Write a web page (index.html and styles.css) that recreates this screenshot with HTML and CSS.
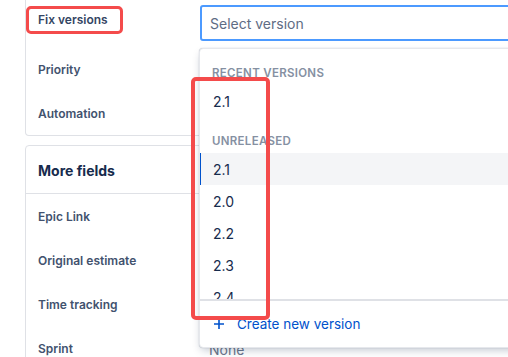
FILE: index.html
```html
<!DOCTYPE html>
<html lang="en">
<head>
  <meta charset="UTF-8" />
  <meta name="viewport" content="width=device-width, initial-scale=1" />
  <title>Fix versions</title>
  <link rel="stylesheet" href="styles.css">
</head>
<body>
  <main class="page">
    <section class="panel panel-top">
      <div class="field-row field-row-first">
        <div class="field-label">Fix versions</div>
        <div class="field-value">
          <div class="select-box">Select version</div>
        </div>
      </div>
      <div class="field-row">
        <div class="field-label">Priority</div>
        <div class="field-value"></div>
      </div>
      <div class="field-row">
        <div class="field-label">Automation</div>
        <div class="field-value"></div>
      </div>
    </section>

    <section class="panel">
      <div class="panel-header">More fields</div>
      <div class="field-row">
        <div class="field-label">Epic Link</div>
        <div class="field-value"></div>
      </div>
      <div class="field-row">
        <div class="field-label">Original estimate</div>
        <div class="field-value"></div>
      </div>
      <div class="field-row">
        <div class="field-label">Time tracking</div>
        <div class="field-value"></div>
      </div>
      <div class="field-row">
        <div class="field-label">Sprint</div>
        <div class="field-value muted">None</div>
      </div>
    </section>

    <!-- version picker menu, open over the fields -->
    <div class="menu">
      <div class="menu-list">
        <div class="menu-group">Recent versions</div>
        <div class="menu-option">2.1</div>
        <div class="menu-group">Unreleased</div>
        <div class="menu-option is-active">2.1</div>
        <div class="menu-option">2.0</div>
        <div class="menu-option">2.2</div>
        <div class="menu-option">2.3</div>
        <div class="menu-option">2.4</div>
      </div>
      <div class="menu-footer">
        <svg class="plus-icon" width="12" height="12" viewBox="0 0 12 12" aria-hidden="true">
          <path d="M6 1v10M1 6h10" stroke="currentColor" stroke-width="1.6" fill="none"/>
        </svg>
        <span>Create new version</span>
      </div>
    </div>

    <!-- annotation marks -->
    <div class="mark mark-label"></div>
    <div class="mark mark-list"></div>
  </main>
</body>
</html>
```

FILE: styles.css
```css
:root {
  --text-color: #172b4d;
  --label-color: #42526e;
  --muted-color: #6b778c;
  --border-color: #dfe1e6;
  --focus-color: #4c9aff;
  --link-color: #0052cc;
  --hover-bg: #f4f5f7;
  --mark-color: #f44b4b;
}

html,
body {
  margin: 0;
  padding: 0;
  overflow: hidden;
  background: #fff;
}

body {
  font-family: 'Inter', 'Liberation Sans', sans-serif;
  color: var(--text-color);
  height: 357px;
}

.page {
  position: relative;
  padding-left: 25px;
  width: 600px;
}

.panel {
  border: 1px solid var(--border-color);
  border-radius: 4px;
  width: 560px;
  margin-bottom: 9px;
}

.panel-top {
  border-top: none;
  border-top-left-radius: 0;
  border-top-right-radius: 0;
}

.field-row {
  display: grid;
  grid-template-columns: 162px 1fr;
  align-items: center;
  height: 44px;
  padding-left: 12px;
}

.field-row-first {
  height: 47px;
  align-items: start;
}

.field-row-first .field-label {
  margin-top: 10px;
  line-height: 20px;
  color: #344563;
}

.field-row-first .field-value {
  padding-top: 5px;
}

.field-label {
  font-size: 12px;
  font-weight: 600;
  color: var(--label-color);
}

.field-value {
  font-size: 14px;
}

.muted {
  color: var(--muted-color);
  padding-left: 9px;
  padding-top: 2px;
}

.select-box {
  box-sizing: border-box;
  height: 36px;
  width: 340px;
  border: 2px solid var(--focus-color);
  border-radius: 3px;
  padding-left: 8px;
  display: flex;
  align-items: center;
  font-size: 14px;
  color: #5e6c84;
}

.panel-header {
  box-sizing: border-box;
  height: 48px;
  padding-left: 12px;
  padding-top: 1px;
  display: flex;
  align-items: center;
  font-size: 14px;
  font-weight: 700;
  color: var(--text-color);
  border-bottom: 1px solid var(--border-color);
}

/* dropdown menu */
.menu {
  position: absolute;
  top: 48px;
  left: 199px;
  width: 340px;
  background: #fff;
  border: 1px solid #e6e8ec;
  border-radius: 4px;
  box-shadow: 0 4px 8px -2px rgba(9, 30, 66, 0.25), 0 0 1px rgba(9, 30, 66, 0.31);
}

.menu-list {
  height: 250px;
  overflow: hidden;
}

.menu-group {
  box-sizing: border-box;
  height: 36px;
  padding: 18px 12px 0;
  font-size: 11.5px;
  line-height: 12px;
  font-weight: 600;
  letter-spacing: 0.3px;
  text-transform: uppercase;
  color: #8590a2;
}

.menu-option {
  box-sizing: border-box;
  height: 32px;
  padding-left: 12px;
  display: flex;
  align-items: center;
  font-size: 14px;
  color: var(--text-color);
  border-left: 2px solid transparent;
  margin-left: -1px;
}

.menu-option.is-active {
  background: var(--hover-bg);
  border-left-color: var(--link-color);
}

.menu-footer {
  height: 46px;
  border-top: 2px solid var(--border-color);
  display: flex;
  align-items: center;
  gap: 12px;
  padding-left: 13px;
  font-size: 13.5px;
  color: var(--link-color);
}

.plus-icon {
  display: block;
}

/* red annotation boxes */
.mark {
  position: absolute;
  border: 3px solid var(--mark-color);
  border-radius: 5px;
  box-sizing: border-box;
}

.mark-label {
  left: 26px;
  top: 6px;
  width: 97px;
  height: 28px;
}

.mark-list {
  left: 191px;
  top: 77px;
  width: 79px;
  height: 243px;
  border-width: 4px;
}
```
